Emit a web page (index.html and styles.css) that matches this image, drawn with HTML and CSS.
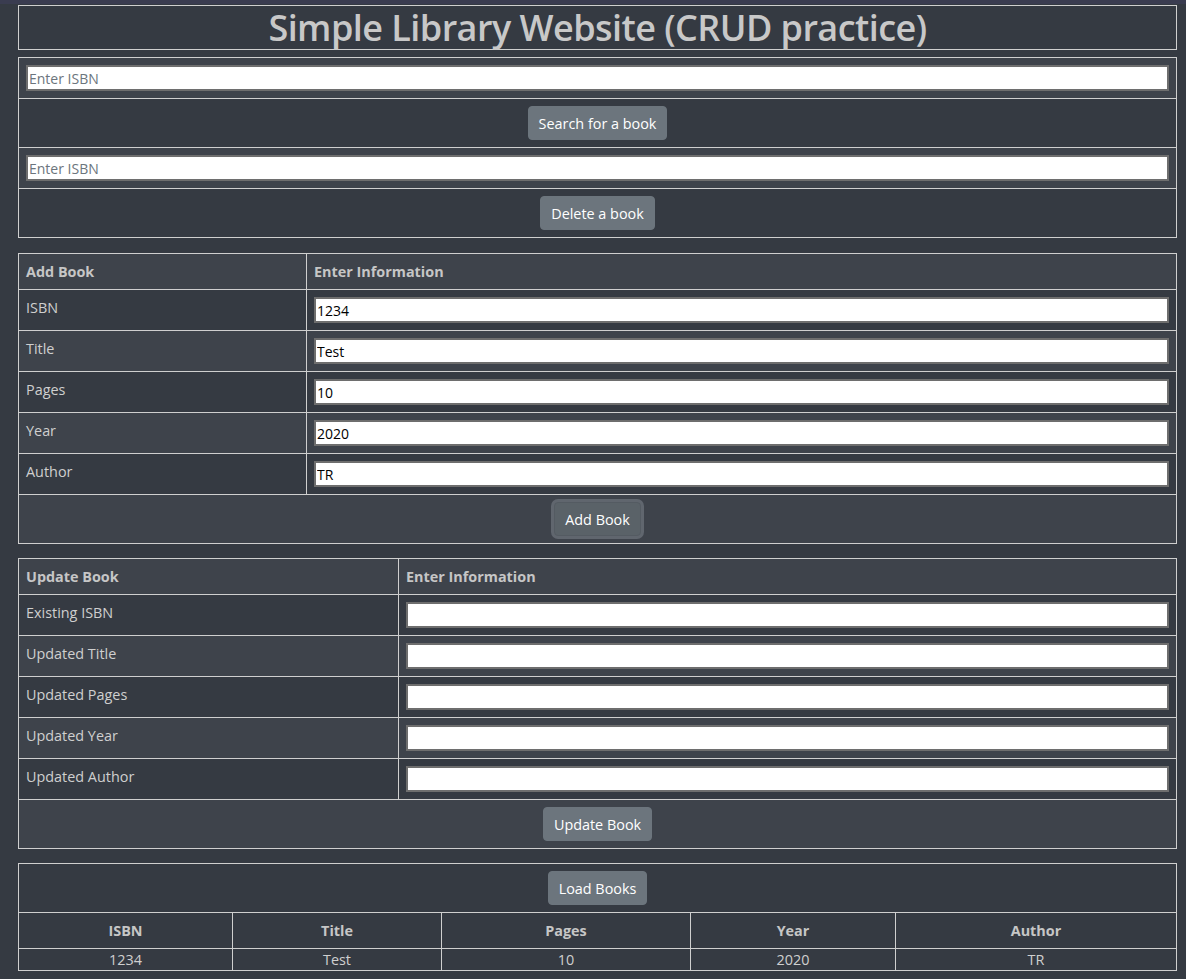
FILE: index.html
```html
<!DOCTYPE html>
<html lang="en">
<head>
<meta charset="utf-8">
<title>Simple Library Website</title>
<link rel="stylesheet" href="styles.css">
</head>
<body>
<div class="topstrip"></div>
<main class="page">
  <table class="tbl title-tbl">
    <tr><td><h1 class="title">Simple Library Website (CRUD practice)</h1></td></tr>
  </table>

  <table class="tbl striped search-tbl">
    <tr><td><input class="field" type="text" placeholder="Enter ISBN"></td></tr>
    <tr><td class="center"><button class="btn">Search for a book</button></td></tr>
    <tr><td><input class="field" type="text" placeholder="Enter ISBN"></td></tr>
    <tr><td class="center"><button class="btn">Delete a book</button></td></tr>
  </table>

  <table class="tbl striped form-tbl add-tbl">
    <tr><th class="label-col">Add Book</th><th>Enter Information</th></tr>
    <tr><td>ISBN</td><td><input class="field" type="text" value="1234"></td></tr>
    <tr><td>Title</td><td><input class="field" type="text" value="Test"></td></tr>
    <tr><td>Pages</td><td><input class="field" type="text" value="10"></td></tr>
    <tr><td>Year</td><td><input class="field" type="text" value="2020"></td></tr>
    <tr><td>Author</td><td><input class="field" type="text" value="TR"></td></tr>
    <tr><td colspan="2" class="center"><button class="btn btn-focus">Add Book</button></td></tr>
  </table>

  <table class="tbl striped form-tbl upd-tbl">
    <tr><th class="label-col">Update Book</th><th>Enter Information</th></tr>
    <tr><td>Existing ISBN</td><td><input class="field" type="text"></td></tr>
    <tr><td>Updated Title</td><td><input class="field" type="text"></td></tr>
    <tr><td>Updated Pages</td><td><input class="field" type="text"></td></tr>
    <tr><td>Updated Year</td><td><input class="field" type="text"></td></tr>
    <tr><td>Updated Author</td><td><input class="field" type="text"></td></tr>
    <tr><td colspan="2" class="center"><button class="btn">Update Book</button></td></tr>
  </table>

  <table class="tbl list-tbl">
    <tr><td colspan="5" class="center"><button class="btn">Load Books</button></td></tr>
    <tr class="head">
      <th class="c1">ISBN</th><th class="c2">Title</th><th class="c3">Pages</th><th class="c4">Year</th><th class="c5">Author</th>
    </tr>
    <tr class="data">
      <td>1234</td><td>Test</td><td>10</td><td>2020</td><td>TR</td>
    </tr>
  </table>
</main>
</body>
</html>
```

FILE: styles.css
```css
html, body {
  margin: 0;
  padding: 0;
  background: #353a42;
}

body {
  font-family: "Open Sans", "Noto Sans", sans-serif;
  font-size: 14.4px;
  line-height: 21px;
  color: #cfcfcf;
}

.topstrip {
  height: 4px;
  background: #3a3c50;
}

.page {
  padding: 1px 9px 0 18px;
}

.tbl {
  width: 100%;
  border-collapse: collapse;
  margin-bottom: 14px;
  border: 1px solid #cfcfcf;
}

.tbl td, .tbl th {
  border: 1px solid #cfcfcf;
  padding: 7px;
  vertical-align: top;
  text-align: left;
}

.tbl th {
  font-weight: 700;
  color: #c6c6c6;
}

.title-tbl {
  margin-bottom: 7px;
}

.search-tbl {
  margin-bottom: 15px;
}

.title-tbl td {
  padding: 0;
}

.title {
  margin: 0;
  font-size: 36px;
  line-height: 43px;
  font-weight: 600;
  letter-spacing: -0.55px;
  text-align: center;
  color: #c8c8c8;
}

.striped tr:nth-child(odd) {
  background: #3e434b;
}

.center {
  text-align: center !important;
}

.field {
  display: block;
  box-sizing: border-box;
  width: 100%;
  height: 26px;
  margin: 0;
  padding: 1px 2px 1px 1px;
  border: 2px solid #6e6e6e;
  background: #fff;
  color: #000;
  font-family: "Open Sans", "Noto Sans", sans-serif;
  font-size: 14px;
}

.field::placeholder {
  color: #6c757d;
}

.btn {
  display: inline-block;
  font-family: "Open Sans", "Noto Sans", sans-serif;
  font-size: 14.4px;
  line-height: 21px;
  padding: 5.5px 10px;
  border: 1px solid #6c757d;
  border-radius: 4px;
  background: #6c757d;
  color: #fff;
  cursor: pointer;
}

.btn-focus {
  background: #5a6268;
  border-color: #545b62;
  box-shadow: 0 0 0 3px rgba(130, 138, 145, 0.5);
}

.add-tbl .label-col {
  width: 273px;
}

.upd-tbl .label-col {
  width: 365px;
}

.list-tbl th, .list-tbl td {
  text-align: center;
}

.list-tbl .data td {
  padding: 0;
}

.list-tbl .c1 { width: 199px; }
.list-tbl .c2 { width: 194px; }
.list-tbl .c3 { width: 234px; }
.list-tbl .c4 { width: 190px; }
```
